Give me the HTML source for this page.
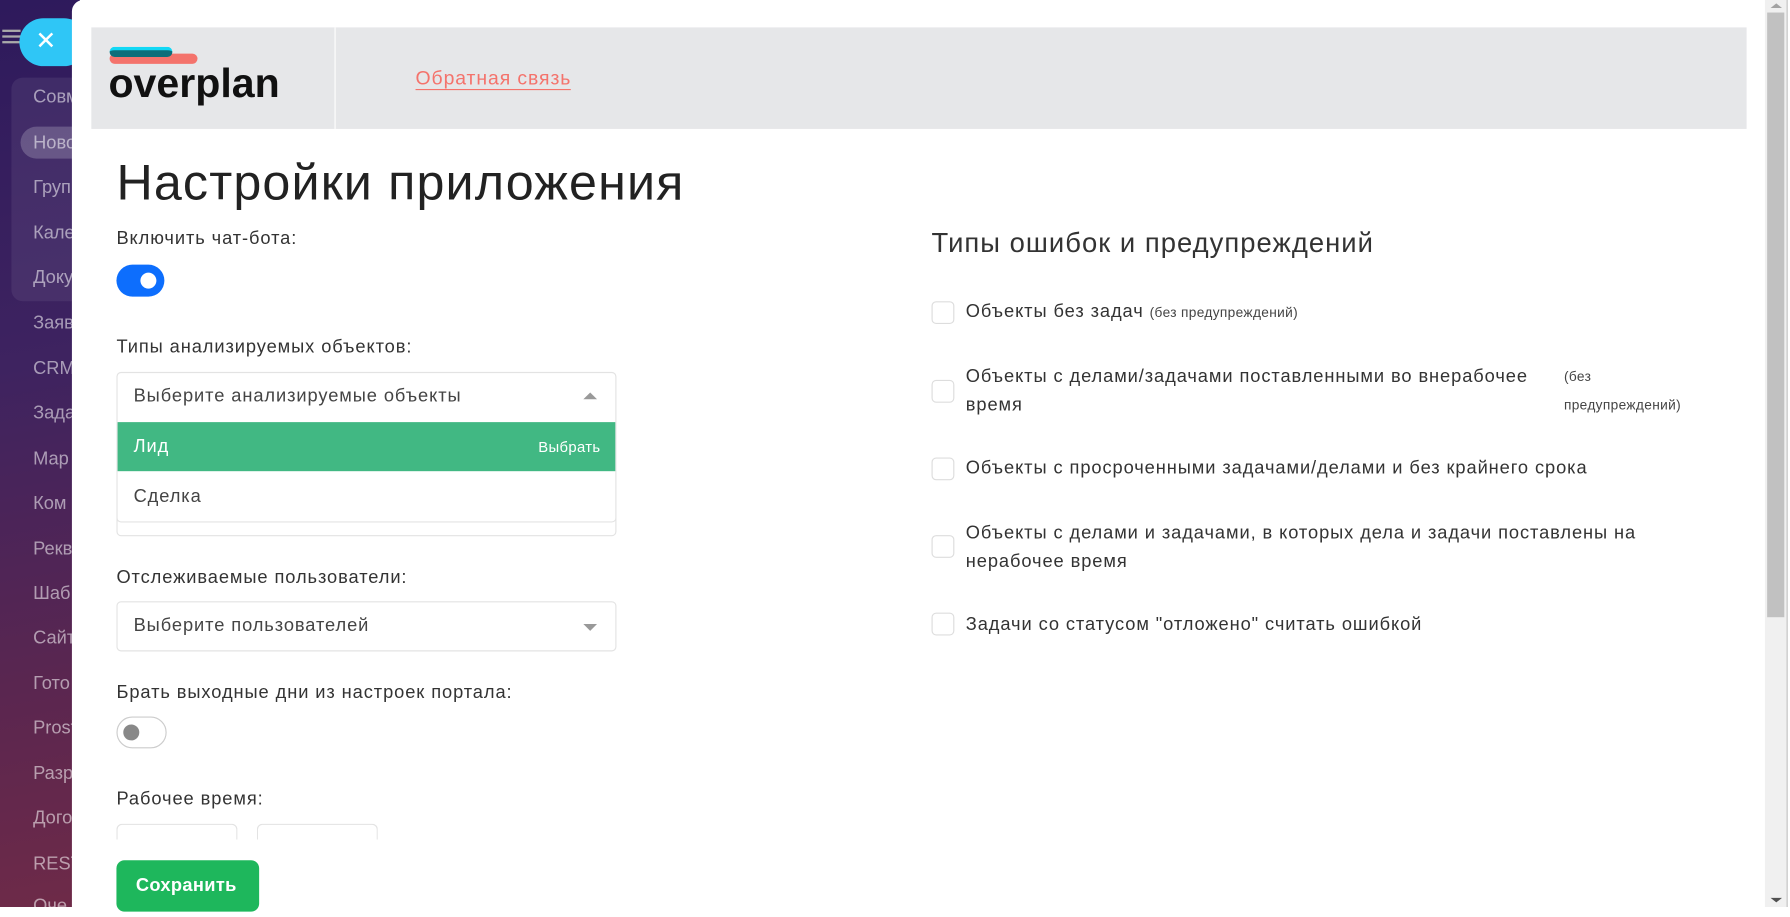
<!DOCTYPE html>
<html><head><meta charset="utf-8"><style>
html,body{margin:0;padding:0;width:1790px;height:907px;overflow:hidden;background:#fff}
#w{position:absolute;left:0;top:0;width:1568px;height:795px;transform:scale(1.14158,1.14088);transform-origin:0 0;font-family:"Liberation Sans","Noto Sans CJK SC",sans-serif;color:#333;letter-spacing:0.8px}
.side{position:absolute;left:0;top:0;width:70px;height:795px;background:linear-gradient(170deg,#2e1a5c 0%,#3e2360 40%,#5a2650 75%,#6e2a48 100%);letter-spacing:0}
.side .grp{position:absolute;left:10px;top:68px;width:70px;height:196px;background:rgba(255,255,255,0.07);border-radius:10px}
.side .it{position:absolute;left:29px;font-size:16px;color:rgba(255,255,255,0.55)}
.side .act{position:absolute;left:18px;top:111px;width:60px;height:28px;border-radius:14px;background:rgba(255,255,255,0.2)}
.close{position:absolute;left:17px;top:16px;width:60px;height:42px;border-radius:21px;background:#2fc6f6}
.close span{position:absolute;left:14px;top:7px;color:#fff;font-size:22px}
.ham{position:absolute;left:2px;top:26px;width:16px;height:2px;background:#aaa;box-shadow:0 5px 0 #aaa,0 10px 0 #aaa}
.panel{position:absolute;left:63px;top:0;width:1483px;height:795px;background:#fff;border-radius:10px 0 0 0}
.hdr{position:absolute;left:80px;top:24px;width:1450px;height:89px;background:#e6e7e9}
.hdr .sep{position:absolute;left:213px;top:0;width:1px;height:89px;background:#fff}
.fb{position:absolute;left:284px;top:35px;color:#f4736c;font-size:17px;border-bottom:1px solid #f4736c;line-height:19px}
h1{position:absolute;left:102px;top:136px;margin:0;font-weight:normal;font-size:44px;color:#222;letter-spacing:1px}
.lbl{position:absolute;left:102px;font-size:16px;color:#333}
.tog{position:absolute;left:102px;width:42px;height:28px;border-radius:15px}
.sel{position:absolute;left:102px;width:436px;height:42px;border:1px solid #e3e3e3;border-radius:4px;background:#fff}
.sel .t{position:absolute;left:14px;top:12px;font-size:16px;color:#444}
.tri{position:absolute;right:16px;top:18px;width:0;height:0;border-left:6px solid transparent;border-right:6px solid transparent}
.cb{position:absolute;left:816px;width:18px;height:18px;border:1px solid #ddd;border-radius:4px}
.ct{position:absolute;left:846px;font-size:16px;color:#333;line-height:25px}
.sm{font-size:12px;color:#444;letter-spacing:0.3px}
</style></head><body><div id="w">
<div class="side">
<div class="grp"></div><div class="act"></div>
<div class="it" style="top:77px">Совм</div>
<div class="it" style="top:117px">Ново</div>
<div class="it" style="top:156px">Груп</div>
<div class="it" style="top:196px">Кале</div>
<div class="it" style="top:235px">Доку</div>
<div class="it" style="top:275px">Заяв</div>
<div class="it" style="top:315px">CRM</div>
<div class="it" style="top:354px">Зада</div>
<div class="it" style="top:394px">Мар</div>
<div class="it" style="top:433px">Ком</div>
<div class="it" style="top:473px">Рекв</div>
<div class="it" style="top:512px">Шаб</div>
<div class="it" style="top:551px">Сайт</div>
<div class="it" style="top:591px">Гото</div>
<div class="it" style="top:630px">Prost</div>
<div class="it" style="top:670px">Разр</div>
<div class="it" style="top:709px">Дого</div>
<div class="it" style="top:749px">REST</div>
<div class="it" style="top:786px">Оче</div>
</div>
<div class="ham"></div>
<div class="close"><span>✕</span></div>
<div class="panel"></div>
<div class="hdr"><div class="sep"></div>
<div style="position:absolute;left:16px;top:23px;width:77px;height:9px;border-radius:5px;background:#f4736c"></div>
<div style="position:absolute;left:16px;top:17px;width:55px;height:9px;border-radius:5px;background:#0d6e7a;border-top:3px solid #12d8f5;box-sizing:border-box"></div>
<div style="position:absolute;left:15px;top:28px;font-size:36px;font-weight:bold;color:#111;letter-spacing:0">overplan</div>
<div class="fb">Обратная связь</div>
</div>
<h1>Настройки приложения</h1>
<div class="lbl" style="top:201px">Включить чат-бота:</div>
<div class="tog" style="top:232px;background:#0d6efd"><div style="position:absolute;left:21px;top:7px;width:14px;height:14px;border-radius:7px;background:#fff"></div></div>
<div class="lbl" style="top:296px">Типы анализируемых объектов:</div>
<div class="sel" style="top:326px;height:142px"><div class="t">Выберите анализируемые объекты</div><div class="tri" style="border-bottom:6px solid #999;top:17px"></div>
<div style="position:absolute;left:-1px;top:43px;width:436px;height:87px;border:1px solid #e3e3e3;border-top:none;border-radius:0 0 4px 4px;background:#fff">
<div style="position:absolute;left:0;top:0;width:436px;height:43px;background:#41b883;color:#fff"><span style="position:absolute;left:14px;top:13px;font-size:16px">Лид</span><span style="position:absolute;right:13px;top:14px;font-size:13px;letter-spacing:0.3px">Выбрать</span></div>
<div style="position:absolute;left:14px;top:57px;font-size:16px;color:#444">Сделка</div>
</div></div>
<div class="lbl" style="top:498px">Отслеживаемые пользователи:</div>
<div class="sel" style="top:527px"><div class="t">Выберите пользователей</div><div class="tri" style="border-top:6px solid #999;top:19px"></div></div>
<div class="lbl" style="top:599px">Брать выходные дни из настроек портала:</div>
<div class="tog" style="top:628px;border:1px solid #ccc;box-sizing:border-box;width:44px"><div style="position:absolute;left:5px;top:6px;width:14px;height:14px;border-radius:7px;background:#888"></div></div>
<div class="lbl" style="top:692px">Рабочее время:</div>
<div style="position:absolute;left:102px;top:722px;width:104px;height:13px;border:1px solid #e3e3e3;border-bottom:none;border-radius:5px 5px 0 0"></div>
<div style="position:absolute;left:225px;top:722px;width:104px;height:13px;border:1px solid #e3e3e3;border-bottom:none;border-radius:5px 5px 0 0"></div>
<div style="position:absolute;left:102px;top:754px;width:125px;height:45px;border-radius:7px;background:#1eb75c;color:#fff;font-size:16px;font-weight:bold;letter-spacing:0.3px"><span style="position:absolute;left:17px;top:14px">Сохранить</span></div>
<div style="position:absolute;left:816px;top:200px;font-size:24px;color:#333;letter-spacing:0.9px">Типы ошибок и предупреждений</div>
<div class="cb" style="top:264px"></div><div class="ct" style="top:261px">Объекты без задач <span class="sm">(без предупреждений)</span></div>
<div class="cb" style="top:333px"></div><div class="ct" style="top:318px">Объекты с делами/задачами поставленными во внерабочее<br>время</div>
<div class="ct sm" style="left:1370px;top:318px;font-size:12px">(без<br>предупреждений)</div>
<div class="cb" style="top:401px"></div><div class="ct" style="top:398px">Объекты с просроченными задачами/делами и без крайнего срока</div>
<div class="cb" style="top:469px"></div><div class="ct" style="top:455px">Объекты с делами и задачами, в которых дела и задачи поставлены на<br>нерабочее время</div>
<div class="cb" style="top:537px"></div><div class="ct" style="top:535px">Задачи со статусом "отложено" считать ошибкой</div>
<div style="position:absolute;left:1546px;top:0;width:19px;height:795px;background:#f0f0f0"></div>
<div style="position:absolute;left:1548px;top:11px;width:15px;height:530px;background:#c1c1c1"></div>
<div style="position:absolute;left:1565px;top:0;width:3px;height:795px;background:#fff;border-left:1px solid #c1c1c1;box-sizing:border-box"></div>
<div style="position:absolute;left:1551px;top:3px;border-left:5px solid transparent;border-right:5px solid transparent;border-bottom:4px solid #a3a3a3"></div>
<div style="position:absolute;left:1551px;top:787px;border-left:5px solid transparent;border-right:5px solid transparent;border-top:4px solid #505050"></div>
</div></body></html>
